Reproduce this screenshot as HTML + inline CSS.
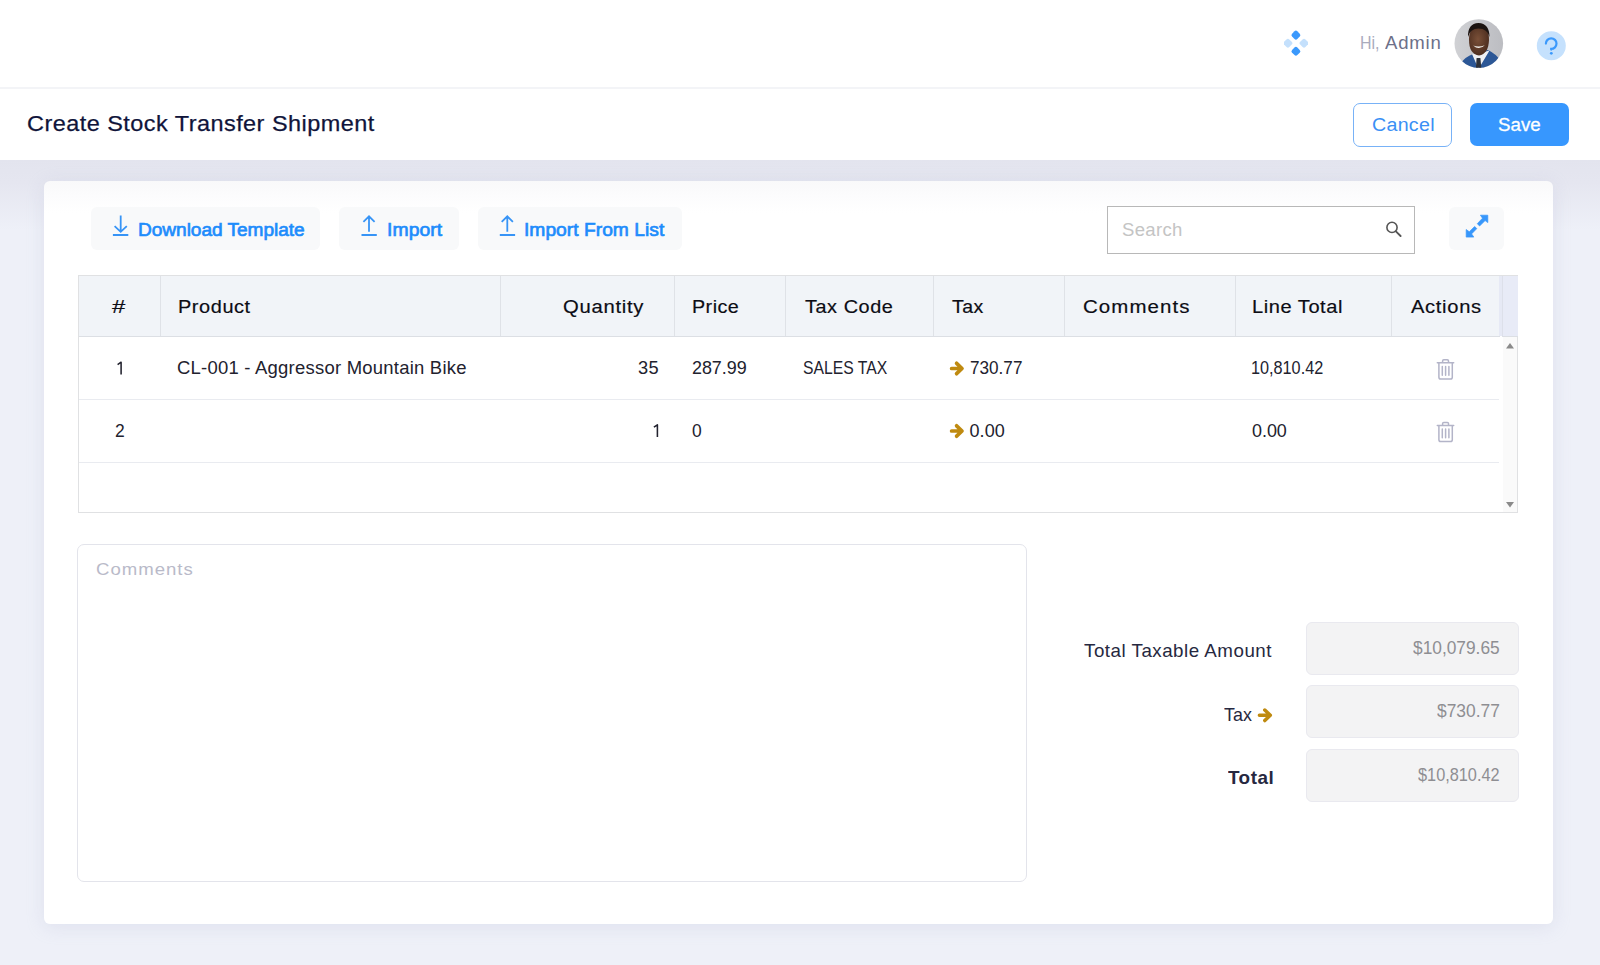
<!DOCTYPE html>
<html><head><meta charset="utf-8"><title>Create Stock Transfer Shipment</title>
<style>
html,body{margin:0;padding:0;width:1600px;height:965px;overflow:hidden;background:#eef0f8;font-family:"Liberation Sans",sans-serif}
.abs{position:absolute}
.tx{position:absolute;white-space:nowrap;font-family:"Liberation Sans",sans-serif}
#hdr{left:0;top:0;width:1600px;height:87px;background:#fff;border-bottom:2px solid #f3f4f7}
#ttl{left:0;top:89px;width:1600px;height:71px;background:#fff}
#bgshade{left:0;top:160px;width:1600px;height:70px;background:linear-gradient(#e3e4ee 0px,#e5e6f0 22px,#eef0f8 70px)}
#card{left:44px;top:181px;width:1509px;height:743px;background:linear-gradient(#f9f9fa 0px,#fcfcfd 16px,#ffffff 32px);border-radius:6px;box-shadow:0 3px 18px rgba(175,178,210,.24)}
.tb{background:#f8f9fa;border-radius:6px;top:207px;height:43px}
#btnCancel{left:1353px;top:103px;width:97px;height:42px;border:1px solid #78b2f7;border-radius:7px;background:#fff}
#btnSave{left:1470px;top:103px;width:99px;height:43px;background:#3797fe;border-radius:7px}
#search{left:1107px;top:206px;width:306px;height:46px;border:1px solid #b8b8b8;background:#fff}
#tbl{left:78px;top:275px;width:1438px;height:236px;border:1px solid #e0e1e3;background:#fff}
#thead{left:79px;top:276px;width:1421px;height:60px;background:#f1f4f8;border-bottom:1px solid #dcdfe4}
.vd{top:276px;width:1px;height:60px;background:#dfe2e7}
#vdl{left:1499px;top:276px;width:3px;height:60px;background:#e6e9f5}
.hl{left:79px;width:1420px;height:1px;background:#e9ebf0}
#sbh{left:1502px;top:276px;width:15px;border-left:1px solid #dde0ea;height:60px;background:#e8ebf7;border-bottom:1px solid #dcdfe4}
#sbt{left:1503px;top:337px;width:14px;height:175px;background:#fafafa}
#cmt{left:77px;top:544px;width:948px;height:336px;border:1px solid #e3e4eb;border-radius:7px;background:#fff}
.tot{left:1306px;width:211px;height:51px;background:#f3f3f4;border:1px solid #e9e9ef;border-radius:6px}
</style></head><body>
<div id="bgshade" class="abs"></div>
<div id="card" class="abs"></div>
<div id="hdr" class="abs"></div>
<div id="ttl" class="abs"></div>

<!-- header icons -->
<svg class="abs" style="left:1284px;top:28px" width="24" height="30" viewBox="1284 28 24 30">
  <rect x="1292.2" y="31.4" width="7.4" height="7.4" rx="2" transform="rotate(45 1295.9 35.1)" fill="#3b99fc"/>
  <rect x="1292.2" y="47.6" width="7.4" height="7.4" rx="2" transform="rotate(45 1295.9 51.3)" fill="#3b99fc"/>
  <rect x="1284.2" y="39.5" width="7.4" height="7.4" rx="2" transform="rotate(45 1287.9 43.2)" fill="#c4e0fc"/>
  <rect x="1300.3" y="39.5" width="7.4" height="7.4" rx="2" transform="rotate(45 1304 43.2)" fill="#c4e0fc"/>
</svg>
<svg class="abs" style="left:1450px;top:15px" width="60" height="60" viewBox="1450 15 60 60">
  <defs><clipPath id="av"><circle cx="1478.8" cy="43.5" r="24.3"/></clipPath>
  <linearGradient id="avbg" x1="0" y1="0" x2="1" y2="0"><stop offset="0" stop-color="#d2d3d6"/><stop offset="1" stop-color="#b9babf"/></linearGradient>
  <radialGradient id="skin" cx="0.45" cy="0.45" r="0.6"><stop offset="0" stop-color="#7a5038"/><stop offset="1" stop-color="#4a2c1e"/></radialGradient></defs>
  <g clip-path="url(#av)">
    <rect x="1450" y="15" width="60" height="60" fill="url(#avbg)"/>
    <path d="M1458 75 L1461 63 Q1465 57 1473 54 L1478 52 L1488 50 Q1496 54 1500 60 L1504 75 Z" fill="#2c5796"/>
    <path d="M1472 54 L1478.5 69 L1489.5 50.5 L1484 52 Z" fill="#eef0f3"/>
    <path d="M1476.6 58 L1480.4 58 L1481.5 70 L1475.8 70 Z" fill="#2e3138"/>
    <path d="M1469 40 Q1469 54 1479 55.5 Q1488.5 54 1489 40 Q1489 26 1479 26 Q1469 26 1469 40 Z" fill="url(#skin)"/>
    <path d="M1468 37 Q1467.5 23.5 1478.5 23 Q1489.5 23.5 1489.5 37 Q1487.5 28.5 1478.5 28.5 Q1470 28.5 1468 37 Z" fill="#1c1411"/>
    <path d="M1473.2 45.6 Q1479 50.8 1484.8 45.2 Q1479 47.6 1473.2 45.6 Z" fill="#f4f1ec"/>
  </g>
</svg>
<svg class="abs" style="left:1536px;top:31px" width="30" height="30" viewBox="1536 31 30 30">
  <circle cx="1551.3" cy="45.7" r="14.5" fill="#c5e1fd"/>
  <path d="M1545.9 43.6 A5.3 5.3 0 1 1 1551.2 48.9 L1551.2 49.6" fill="none" stroke="#3b99fc" stroke-width="2.2" stroke-linecap="round"/>
  <circle cx="1551.3" cy="53.3" r="1.4" fill="#3b99fc"/>
</svg>

<div id="btnCancel" class="abs"></div>
<div id="btnSave" class="abs"></div>

<!-- toolbar -->
<div class="abs tb" style="left:91px;width:229px"></div>
<div class="abs tb" style="left:339px;width:120px"></div>
<div class="abs tb" style="left:478px;width:204px"></div>
<div class="abs tb" style="left:1449px;width:55px"></div>
<svg class="abs" style="left:105px;top:210px" width="30" height="30" viewBox="105 210 30 30">
  <path d="M120.7 215.6 V231.4 M114.6 226.2 L120.7 231.8 L126.8 226.2 M112.9 235 H128.3" fill="none" stroke="#3794f6" stroke-width="1.8"/>
</svg>
<svg class="abs" style="left:355px;top:210px" width="30" height="30" viewBox="355 210 30 30">
  <path d="M369 216.3 V231.8 M363.4 221.9 L369 216.3 L374.6 221.9 M361.5 235 H376.8" fill="none" stroke="#3794f6" stroke-width="1.8"/>
</svg>
<svg class="abs" style="left:493px;top:210px" width="30" height="30" viewBox="493 210 30 30">
  <path d="M507.3 216.3 V231.8 M501.7 221.9 L507.3 216.3 L512.9 221.9 M499.8 235 H515.1" fill="none" stroke="#3794f6" stroke-width="1.8"/>
</svg>
<div id="search" class="abs"></div>
<svg class="abs" style="left:1380px;top:215px" width="28" height="28" viewBox="1380 215 28 28">
  <circle cx="1392" cy="227.4" r="5.1" fill="none" stroke="#555" stroke-width="1.6"/>
  <path d="M1395.9 231.4 L1400.6 236" stroke="#555" stroke-width="1.9" stroke-linecap="round"/>
</svg>
<svg class="abs" style="left:1460px;top:210px" width="34" height="34" viewBox="1460 210 34 34">
  <path d="M1480.4 215.2 L1487.8 215.2 L1487.8 222.6 L1485.1 220.6 L1479.6 226 L1477.3 223.7 L1482.5 218.2 Z M1466.2 229.5 L1466.2 237.1 L1473.8 237.1 L1471.6 233.9 L1476.8 228.6 L1474.6 226.5 L1469.3 231.8 Z" fill="#3797fb" stroke="#3797fb" stroke-width="0.7" stroke-linejoin="round"/>
</svg>

<!-- table -->
<div id="tbl" class="abs"></div>
<div id="thead" class="abs"></div>
<div id="sbh" class="abs"></div>
<div class="abs vd" style="left:160px"></div>
<div class="abs vd" style="left:500px"></div>
<div class="abs vd" style="left:674px"></div>
<div class="abs vd" style="left:785px"></div>
<div class="abs vd" style="left:933px"></div>
<div class="abs vd" style="left:1064px"></div>
<div class="abs vd" style="left:1235px"></div>
<div class="abs vd" style="left:1391px"></div>
<div id="vdl" class="abs"></div>
<div id="sbt" class="abs"></div>
<svg class="abs" style="left:110px;top:355px" width="560" height="90" viewBox="110 355 560 90">
  <path d="M121.1 374.4 V362.2 L117.6 364.6" fill="none" stroke="#22222e" stroke-width="1.55" stroke-linejoin="round"/>
  <path d="M657.4 437.0 V424.8 L653.9 427.2" fill="none" stroke="#22222e" stroke-width="1.55" stroke-linejoin="round"/>
</svg>
<div class="abs hl" style="top:399px"></div>
<div class="abs hl" style="top:462px"></div>
<svg class="abs" style="left:1499px;top:337px" width="18" height="175" viewBox="1499 337 18 175">
  <path d="M1506 348.5 H1514 L1510 343 Z" fill="#8a8a8a"/>
  <path d="M1506 502 H1514 L1510 507.5 Z" fill="#8a8a8a"/>
</svg>
<svg class="abs" style="left:945px;top:355px" width="24" height="90" viewBox="945 355 24 90">
  <path d="M951.6 368.5 H961 M956.6 363.3 L962 368.5 L956.6 373.7" fill="none" stroke="#bf8a10" stroke-width="3.7" stroke-linecap="round" stroke-linejoin="round"/>
  <path d="M951.6 431.0 H961 M956.6 425.8 L962 431.0 L956.6 436.2" fill="none" stroke="#bf8a10" stroke-width="3.7" stroke-linecap="round" stroke-linejoin="round"/>
</svg>
<svg class="abs" style="left:1432px;top:355px" width="26" height="92" viewBox="1432 355 26 92">
  <g fill="none" stroke="#b3b4c8" stroke-width="1.5" stroke-linecap="round">
    <path d="M1437.3 362.8 H1453.7 M1442.6 362.5 V361 Q1442.6 359.8 1443.8 359.8 H1447.3 Q1448.5 359.8 1448.5 361 V362.5 M1438.9 363 V377.2 Q1438.9 379 1440.7 379 H1450.5 Q1452.3 379 1452.3 377.2 V363 M1442.3 366.5 V375.2 M1445.6 366.5 V375.2 M1448.9 366.5 V375.2"/>
    <path transform="translate(0 62.6)" d="M1437.3 362.8 H1453.7 M1442.6 362.5 V361 Q1442.6 359.8 1443.8 359.8 H1447.3 Q1448.5 359.8 1448.5 361 V362.5 M1438.9 363 V377.2 Q1438.9 379 1440.7 379 H1450.5 Q1452.3 379 1452.3 377.2 V363 M1442.3 366.5 V375.2 M1445.6 366.5 V375.2 M1448.9 366.5 V375.2"/>
  </g>
</svg>

<!-- comments / totals -->
<div id="cmt" class="abs"></div>
<div class="abs tot" style="top:622px"></div>
<div class="abs tot" style="top:685px"></div>
<div class="abs tot" style="top:749px"></div>
<svg class="abs" style="left:1255px;top:705px" width="20" height="20" viewBox="1255 705 20 20">
  <path d="M1259.4 715.3 H1269.6 M1264.8 710 L1270.3 715.3 L1264.8 720.6" fill="none" stroke="#bf8a10" stroke-width="3.5" stroke-linecap="round" stroke-linejoin="round"/>
</svg>

<div class="tx" style="left:1360.29px;top:34.80px;font-size:17.44px;line-height:17.44px;letter-spacing:0.000px;color:#a9abbd;font-weight:400;transform:scaleX(0.9144);transform-origin:0 0;">Hi,</div>
<div class="tx" style="left:1384.80px;top:34.80px;font-size:17.44px;line-height:17.44px;letter-spacing:0.748px;color:#6d7089;font-weight:400;transform:scaleX(1.0654);transform-origin:0 0;">Admin</div>
<div class="tx" style="left:26.56px;top:113.00px;font-size:22.53px;line-height:22.53px;letter-spacing:0.445px;color:#10143a;font-weight:400;-webkit-text-stroke:0.25px #10143a;transform:scaleX(1.0419);transform-origin:0 0;">Create Stock Transfer Shipment</div>
<div class="tx" style="left:1371.80px;top:114.70px;font-size:19.19px;line-height:19.19px;letter-spacing:0.267px;color:#3a8ff5;font-weight:400;transform:scaleX(1.0234);transform-origin:0 0;">Cancel</div>
<div class="tx" style="left:1497.80px;top:114.70px;font-size:19.19px;line-height:19.19px;letter-spacing:0.000px;color:#ffffff;font-weight:400;-webkit-text-stroke:0.3px #ffffff;transform:scaleX(0.9753);transform-origin:0 0;">Save</div>
<div class="tx" style="left:138.30px;top:219.70px;font-size:19.19px;line-height:19.19px;letter-spacing:-0.049px;color:#1d8cfc;font-weight:400;-webkit-text-stroke:0.7px #1d8cfc;transform:scaleX(0.9954);transform-origin:0 0;">Download Template</div>
<div class="tx" style="left:386.99px;top:219.70px;font-size:19.19px;line-height:19.19px;letter-spacing:0.085px;color:#1d8cfc;font-weight:400;-webkit-text-stroke:0.7px #1d8cfc;transform:scaleX(1.0079);transform-origin:0 0;">Import</div>
<div class="tx" style="left:524.40px;top:219.70px;font-size:19.19px;line-height:19.19px;letter-spacing:0.019px;color:#1d8cfc;font-weight:400;-webkit-text-stroke:0.7px #1d8cfc;transform:scaleX(1.0020);transform-origin:0 0;">Import From List</div>
<div class="tx" style="left:1121.80px;top:220.80px;font-size:18.02px;line-height:18.02px;letter-spacing:0.315px;color:#c4c4c4;font-weight:400;transform:scaleX(1.0289);transform-origin:0 0;">Search</div>
<div class="tx" style="left:112.20px;top:298.40px;font-size:18.9px;line-height:18.9px;letter-spacing:0.000px;color:#0c0c14;font-weight:400;-webkit-text-stroke:0.18px #0c0c14;transform:scaleX(1.2727);transform-origin:0 0;">#</div>
<div class="tx" style="left:178.35px;top:298.40px;font-size:18.9px;line-height:18.9px;letter-spacing:0.553px;color:#0c0c14;font-weight:400;-webkit-text-stroke:0.18px #0c0c14;transform:scaleX(1.0539);transform-origin:0 0;">Product</div>
<div class="tx" style="left:562.70px;top:298.40px;font-size:18.9px;line-height:18.9px;letter-spacing:0.673px;color:#0c0c14;font-weight:400;-webkit-text-stroke:0.18px #0c0c14;transform:scaleX(1.0712);transform-origin:0 0;">Quantity</div>
<div class="tx" style="left:692.36px;top:298.40px;font-size:18.9px;line-height:18.9px;letter-spacing:0.439px;color:#0c0c14;font-weight:400;-webkit-text-stroke:0.18px #0c0c14;transform:scaleX(1.0441);transform-origin:0 0;">Price</div>
<div class="tx" style="left:805.00px;top:298.40px;font-size:18.9px;line-height:18.9px;letter-spacing:0.544px;color:#0c0c14;font-weight:400;-webkit-text-stroke:0.18px #0c0c14;transform:scaleX(1.0505);transform-origin:0 0;">Tax Code</div>
<div class="tx" style="left:952.20px;top:298.40px;font-size:18.9px;line-height:18.9px;letter-spacing:0.472px;color:#0c0c14;font-weight:400;-webkit-text-stroke:0.18px #0c0c14;transform:scaleX(1.0325);transform-origin:0 0;">Tax</div>
<div class="tx" style="left:1082.80px;top:298.40px;font-size:18.9px;line-height:18.9px;letter-spacing:0.997px;color:#0c0c14;font-weight:400;-webkit-text-stroke:0.18px #0c0c14;transform:scaleX(1.0832);transform-origin:0 0;">Comments</div>
<div class="tx" style="left:1252.34px;top:298.40px;font-size:18.9px;line-height:18.9px;letter-spacing:0.509px;color:#0c0c14;font-weight:400;-webkit-text-stroke:0.18px #0c0c14;transform:scaleX(1.0619);transform-origin:0 0;">Line Total</div>
<div class="tx" style="left:1410.70px;top:298.40px;font-size:18.9px;line-height:18.9px;letter-spacing:0.633px;color:#0c0c14;font-weight:400;-webkit-text-stroke:0.18px #0c0c14;transform:scaleX(1.0658);transform-origin:0 0;">Actions</div>
<div class="tx" style="left:176.70px;top:359.40px;font-size:18.02px;line-height:18.02px;letter-spacing:0.222px;color:#22222e;font-weight:400;transform:scaleX(1.0256);transform-origin:0 0;">CL-001 - Aggressor Mountain Bike</div>
<div class="tx" style="left:638.10px;top:359.40px;font-size:18.02px;line-height:18.02px;letter-spacing:0.237px;color:#22222e;font-weight:400;transform:scaleX(1.0120);transform-origin:0 0;">35</div>
<div class="tx" style="left:691.80px;top:359.40px;font-size:18.02px;line-height:18.02px;letter-spacing:-0.049px;color:#22222e;font-weight:400;transform:scaleX(0.9956);transform-origin:0 0;">287.99</div>
<div class="tx" style="left:802.60px;top:359.40px;font-size:18.02px;line-height:18.02px;letter-spacing:0.000px;color:#22222e;font-weight:400;transform:scaleX(0.8732);transform-origin:0 0;">SALES TAX</div>
<div class="tx" style="left:969.60px;top:359.40px;font-size:18.02px;line-height:18.02px;letter-spacing:0.000px;color:#22222e;font-weight:400;transform:scaleX(0.9513);transform-origin:0 0;">730.77</div>
<div class="tx" style="left:1250.80px;top:359.40px;font-size:18.02px;line-height:18.02px;letter-spacing:0.000px;color:#22222e;font-weight:400;transform:scaleX(0.9011);transform-origin:0 0;">10,810.42</div>
<div class="tx" style="left:114.90px;top:422.00px;font-size:18.02px;line-height:18.02px;letter-spacing:0.000px;color:#22222e;font-weight:400;transform:scaleX(0.9700);transform-origin:0 0;">2</div>
<div class="tx" style="left:691.80px;top:422.00px;font-size:18.02px;line-height:18.02px;letter-spacing:0.000px;color:#22222e;font-weight:400;transform:scaleX(0.9700);transform-origin:0 0;">0</div>
<div class="tx" style="left:969.60px;top:422.00px;font-size:18.02px;line-height:18.02px;letter-spacing:0.009px;color:#22222e;font-weight:400;">0.00</div>
<div class="tx" style="left:1251.70px;top:422.00px;font-size:18.02px;line-height:18.02px;letter-spacing:-0.041px;color:#22222e;font-weight:400;transform:scaleX(0.9965);transform-origin:0 0;">0.00</div>
<div class="tx" style="left:95.90px;top:560.60px;font-size:17.15px;line-height:17.15px;letter-spacing:0.916px;color:#b9bac9;font-weight:400;transform:scaleX(1.0845);transform-origin:0 0;">Comments</div>
<div class="tx" style="left:1083.80px;top:642.60px;font-size:17.73px;line-height:17.73px;letter-spacing:0.483px;color:#262840;font-weight:400;transform:scaleX(1.0573);transform-origin:0 0;">Total Taxable Amount</div>
<div class="tx" style="left:1224.40px;top:706.90px;font-size:17.73px;line-height:17.73px;letter-spacing:0.121px;color:#262840;font-weight:400;transform:scaleX(1.0088);transform-origin:0 0;">Tax</div>
<div class="tx" style="left:1228.10px;top:769.00px;font-size:18.02px;line-height:18.02px;letter-spacing:0.466px;color:#262840;font-weight:700;transform:scaleX(1.0480);transform-origin:0 0;">Total</div>
<div class="tx" style="left:1412.80px;top:638.80px;font-size:18.17px;line-height:18.17px;letter-spacing:0.000px;color:#8e8e92;font-weight:400;transform:scaleX(0.9540);transform-origin:0 0;">$10,079.65</div>
<div class="tx" style="left:1436.60px;top:702.10px;font-size:18.17px;line-height:18.17px;letter-spacing:0.000px;color:#8e8e92;font-weight:400;transform:scaleX(0.9583);transform-origin:0 0;">$730.77</div>
<div class="tx" style="left:1417.90px;top:766.20px;font-size:18.17px;line-height:18.17px;letter-spacing:0.000px;color:#8e8e92;font-weight:400;transform:scaleX(0.8979);transform-origin:0 0;">$10,810.42</div>
</body></html>
